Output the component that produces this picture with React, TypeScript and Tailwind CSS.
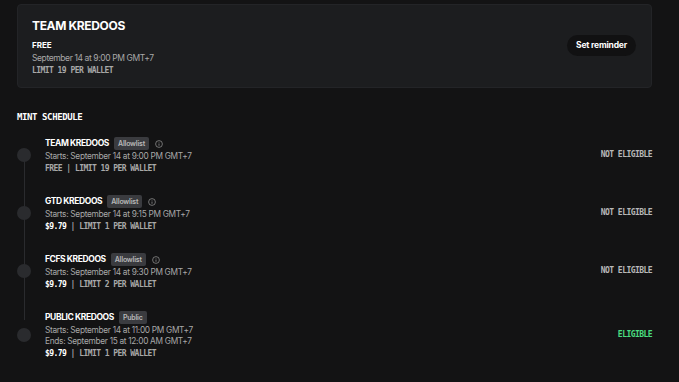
import React from "react";

const sans = { fontFamily: "Inter, 'Noto Sans', sans-serif" };
const mono = { fontFamily: "'DejaVu Sans Mono', monospace" };

function InfoIcon() {
  return (
    <svg width="8" height="8" viewBox="0 0 16 16" fill="none" className="ml-[6px]">
      <circle cx="8" cy="8" r="6.8" stroke="#9a9a9a" strokeWidth="1.4" />
      <line x1="8" y1="7" x2="8" y2="11.5" stroke="#9a9a9a" strokeWidth="1.5" />
      <circle cx="8" cy="4.7" r="0.9" fill="#9a9a9a" />
    </svg>
  );
}

type Item = {
  name: string;
  badge: string;
  info: boolean;
  lines: string[];
  price: string;
  priceBold: boolean;
  limit: string;
  eligible: boolean;
};

const items: Item[] = [
  { name: "TEAM KREDOOS", badge: "Allowlist", info: true, lines: ["Starts: September 14 at 9:00 PM GMT+7"], price: "FREE", priceBold: false, limit: "LIMIT 19 PER WALLET", eligible: false },
  { name: "GTD KREDOOS", badge: "Allowlist", info: true, lines: ["Starts: September 14 at 9:15 PM GMT+7"], price: "$9.79", priceBold: true, limit: "LIMIT 1 PER WALLET", eligible: false },
  { name: "FCFS KREDOOS", badge: "Allowlist", info: true, lines: ["Starts: September 14 at 9:30 PM GMT+7"], price: "$9.79", priceBold: true, limit: "LIMIT 2 PER WALLET", eligible: false },
  { name: "PUBLIC KREDOOS", badge: "Public", info: false, lines: ["Starts: September 14 at 11:00 PM GMT+7", "Ends: September 15 at 12:00 AM GMT+7"], price: "$9.79", priceBold: true, limit: "LIMIT 1 PER WALLET", eligible: true },
];

export default function App() {
  return (
    <div className="w-[679px] h-[382px] bg-[#131314] overflow-hidden pt-[4px] pl-[17px]" style={sans}>
      <div className="w-[635px]">
        {/* Card */}
        <div className="h-[84px] rounded-[4px] bg-[#1c1d1f] border border-[#232427] flex items-center justify-between pl-[14px] pr-[15px]">
          <div className="flex flex-col pt-[1px]">
            <div className="text-[12px] leading-[15px] font-bold text-white tracking-[-0.35px]">TEAM KREDOOS</div>
            <div className="mt-[7px] text-[8px] leading-[10px] font-bold text-white">FREE</div>
            <div className="mt-[3px] text-[8.5px] leading-[11px] text-[#a8a8a8] tracking-[-0.4px]">September 14 at 9:00 PM GMT+7</div>
            <div className="mt-[2px] text-[8px] leading-[9px] text-[#a8a8a8] font-bold tracking-[-0.55px]" style={mono}>LIMIT 19 PER WALLET</div>
          </div>
          <div className="mb-[2px] h-[21px] w-[69px] rounded-full bg-[#111112] flex items-center justify-center text-[8.5px] font-bold text-white tracking-[-0.2px]">Set reminder</div>
        </div>

        {/* Mint schedule */}
        <div className="mt-[24px] text-[9px] leading-[10px] font-bold text-white tracking-[-0.4px]" style={mono}>MINT SCHEDULE</div>

        <div className="relative mt-[15px] flex flex-col gap-[22px]">
          <div className="absolute left-[7px] top-[16px] w-px h-[167px] bg-[#2a2b2e]" />
          {items.map((it) => (
            <div key={it.name} className="relative flex items-center">
              <div className="w-[14px] h-[14px] rounded-full bg-[#2a2b2e] shrink-0" />
              <div className="ml-[14px] flex-1 flex flex-col">
                <div className="flex items-center h-[13px]">
                  <span className="text-[8.5px] leading-[11px] font-bold text-white tracking-[-0.4px]">{it.name}</span>
                  <span className="ml-[5px] h-[13px] px-[4px] rounded-[2px] bg-[#3a3b3f] text-[7px] leading-[13px] font-semibold text-[#b8b8b8] tracking-[-0.2px]">{it.badge}</span>
                  {it.info && <InfoIcon />}
                </div>
                {it.lines.map((l) => (
                  <div key={l} className="mt-[2px] text-[8.3px] leading-[9px] text-[#a8a8a8] tracking-[-0.3px]">{l}</div>
                ))}
                <div className="mt-[3px] text-[8px] leading-[9px] font-bold text-[#a8a8a8] tracking-[-0.55px]" style={mono}>
                  <span className={it.priceBold ? "text-white" : ""}>{it.price}</span> | {it.limit}
                </div>
              </div>
              <div className={`text-[8px] font-bold tracking-[-0.55px] ${it.eligible ? "text-[#4ade80]" : "text-[#b8b8b8]"}`} style={mono}>
                {it.eligible ? "ELIGIBLE" : "NOT ELIGIBLE"}
              </div>
            </div>
          ))}
        </div>
      </div>
    </div>
  );
}
